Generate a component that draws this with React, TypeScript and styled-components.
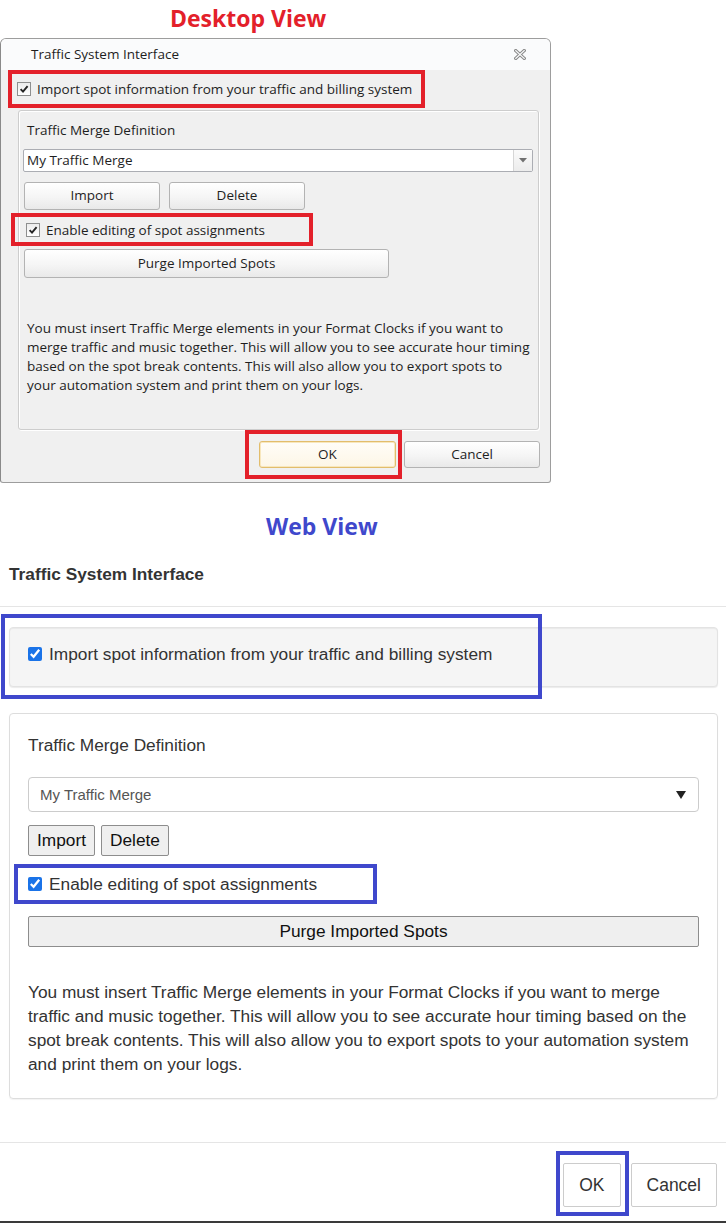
import React from "react";
import styled, { createGlobalStyle } from "styled-components";

const GlobalStyle = createGlobalStyle`
  html, body { margin: 0; padding: 0; background: #ffffff; }
  body { width: 726px; height: 1224px; overflow: hidden; }
  *, *::before, *::after { box-sizing: border-box; }
`;

const Page = styled.div`
  width: 726px;
  height: 1224px;
  display: flex;
  flex-direction: column;
  background: #ffffff;
`;

const ViewTitle = styled.div<{ $color: string; $indent: number; $h: number; $pt: number }>`
  height: ${(p) => p.$h}px;
  padding-top: ${(p) => p.$pt}px;
  padding-left: ${(p) => p.$indent}px;
  font-family: "Open Sans", "Noto Sans", sans-serif;
  font-weight: 700;
  font-size: 23px;
  line-height: 34px;
  color: ${(p) => p.$color};
  white-space: nowrap;
`;

const Highlight = styled.span<{ $color: string; $t: number; $l: number; $w: number; $h: number }>`
  position: absolute;
  top: ${(p) => p.$t}px;
  left: ${(p) => p.$l}px;
  width: ${(p) => p.$w}px;
  height: ${(p) => p.$h}px;
  border: 4px solid ${(p) => p.$color};
  pointer-events: none;
`;

/* ---------------- Desktop (Windows dialog) ---------------- */

const Win = styled.div`
  width: 551px;
  height: 445px;
  border: 1px solid #9d9d9d;
  border-left-color: #8a8a8a;
  border-radius: 6px 6px 3px 3px;
  background: #f0f0f0;
  display: flex;
  flex-direction: column;
  overflow: hidden;
  font-family: "Open Sans", "Noto Sans", sans-serif;
  font-size: 13.5px;
  color: #1e1e1e;
`;

const WinTitleBar = styled.div`
  height: 31px;
  flex: none;
  display: flex;
  align-items: center;
  justify-content: space-between;
  padding: 0 24px 0 30px;
  background: #fafbfc;
  line-height: 31px;
`;

const WinRow = styled.div<{ $ml: number; $w?: number; $h: number; $mt?: number; $pl?: number }>`
  position: relative;
  display: flex;
  align-items: center;
  gap: 6px;
  margin-left: ${(p) => p.$ml}px;
  margin-top: ${(p) => p.$mt ?? 0}px;
  ${(p) => (p.$w ? `width: ${p.$w}px;` : "")}
  height: ${(p) => p.$h}px;
  padding-left: ${(p) => p.$pl ?? 0}px;
  flex: none;
  white-space: nowrap;
`;

const WinCheck = styled.span`
  width: 14px;
  height: 14px;
  flex: none;
  border: 1px solid #8e8f8f;
  background: linear-gradient(#ececec, #ffffff);
  display: inline-flex;
  align-items: center;
  justify-content: center;
`;

const GroupBox = styled.div`
  margin: 2px 0 0 17px;
  width: 521px;
  height: 320px;
  flex: none;
  border: 1px solid #cdcdcd;
  border-radius: 3px;
  box-shadow: inset 1px 1px 0 #ffffff, 1px 1px 0 #ffffff;
  display: flex;
  flex-direction: column;
`;

const GroupLabel = styled.div`
  margin: 10px 0 0 8px;
  line-height: 18px;
`;

const WinCombo = styled.div`
  margin: 10px 0 0 4px;
  width: 510px;
  height: 23px;
  flex: none;
  display: flex;
  border: 1px solid #abadb3;
  border-radius: 2px;
  background: #ffffff;
`;

const WinComboText = styled.span`
  flex: 1;
  padding-left: 3px;
  line-height: 21px;
`;

const WinComboArrow = styled.span`
  width: 19px;
  border-left: 1px solid #d6d6d6;
  display: flex;
  align-items: center;
  justify-content: center;
  background: linear-gradient(#fafafa, #ececec);
`;

const WinButton = styled.button<{ $w: number; $h: number; $primary?: boolean; $ml?: number }>`
  width: ${(p) => p.$w}px;
  height: ${(p) => p.$h}px;
  margin: 0 0 0 ${(p) => p.$ml ?? 0}px;
  padding: 0;
  flex: none;
  border: 1px solid ${(p) => (p.$primary ? "#e2bd6c" : "#b3b3b3")};
  border-radius: 3px;
  background: ${(p) =>
    p.$primary
      ? "linear-gradient(#fffdf8, #fdf6e6)"
      : "linear-gradient(#ffffff, #f5f5f5 55%, #e9e9e9)"};
  box-shadow: ${(p) => (p.$primary ? "inset 0 0 0 1px #f8e7bd" : "none")};
  font-family: inherit;
  font-size: 13.5px;
  color: #1e1e1e;
  line-height: 1;
`;

const WinText = styled.p`
  margin: 41px 0 0 8px;
  line-height: 19px;
  white-space: nowrap;
`;

const Line = styled.span`
  display: block;
`;

const WinFooter = styled.div`
  margin-top: 11px;
  padding-right: 10px;
  display: flex;
  justify-content: flex-end;
  gap: 8px;
`;

const Anchor = styled.div`
  position: relative;
  display: flex;
`;

/* ---------------- Web view ---------------- */

const Web = styled.div`
  display: flex;
  flex-direction: column;
  font-family: "Liberation Sans", Arial, sans-serif;
  font-size: 17.3px;
  color: #333333;
  flex: 1;
`;

const WebHeader = styled.div`
  padding: 19px 9px 20px;
  border-bottom: 1px solid #e5e5e5;
  font-weight: 700;
  line-height: 24px;
`;

const WebBody = styled.div`
  padding: 20px 8px 43px 9px;
  display: flex;
  flex-direction: column;
  gap: 26px;
`;

const Well = styled.div`
  position: relative;
  height: 60px;
  padding: 14px 18px 20px;
  background: #f5f5f5;
  border: 1px solid #e3e3e3;
  border-radius: 4px;
  box-shadow: inset 0 1px 1px rgba(0, 0, 0, 0.05), 0 1px 1px rgba(0, 0, 0, 0.08);
`;

const CheckRow = styled.label<{ $mt?: number }>`
  position: relative;
  display: flex;
  align-items: center;
  gap: 7px;
  height: 24px;
  margin-top: ${(p) => p.$mt ?? 0}px;
  line-height: 24px;
  white-space: nowrap;
`;

const WebCheck = styled.input.attrs({ type: "checkbox" })`
  width: 14px;
  height: 14px;
  margin: 0;
  flex: none;
  accent-color: #1a73e8;
`;

const Panel = styled.div`
  height: 386px;
  padding: 19px 18px 21px;
  border: 1px solid #dddddd;
  border-radius: 4px;
  box-shadow: 0 1px 1px rgba(0, 0, 0, 0.05);
  display: flex;
  flex-direction: column;
`;

const PanelLabel = styled.div`
  line-height: 24px;
`;

const SelectBox = styled.div`
  margin-top: 20px;
  height: 35px;
  flex: none;
  display: flex;
  align-items: center;
  justify-content: space-between;
  padding: 0 12px 0 11px;
  border: 1px solid #cccccc;
  border-radius: 4px;
  background: #ffffff;
  font-size: 15px;
  color: #555555;
`;

const ButtonRow = styled.div`
  margin-top: 13px;
  display: flex;
  gap: 6px;
`;

const WebButton = styled.button<{ $block?: boolean; $mt?: number }>`
  height: 31px;
  margin: ${(p) => p.$mt ?? 0}px 0 0 0;
  padding: 0 8px;
  flex: none;
  ${(p) => (p.$block ? "width: 100%;" : "")}
  border: 1px solid #8d8d8d;
  border-radius: 2px;
  background: #efefef;
  font-family: inherit;
  font-size: 17.3px;
  color: #111111;
`;

const WebText = styled.p`
  margin: 33px 0 0;
  line-height: 24px;
  white-space: nowrap;
`;

const WebFooter = styled.div`
  flex: 1;
  border-top: 1px solid #e5e5e5;
  border-bottom: 2px solid #3a3a3a;
  margin-bottom: 1px;
  padding: 20px 9px 0 0;
  display: flex;
  justify-content: flex-end;
  align-items: flex-start;
  gap: 10px;
`;

const FooterButton = styled.button`
  height: 44px;
  padding: 0 15px;
  border: 1px solid #cccccc;
  border-radius: 2px;
  background: #ffffff;
  font-family: inherit;
  font-size: 17.5px;
  color: #333333;
`;

/* ---------------- Icons ---------------- */

const CheckMark = () => (
  <svg width="10" height="10" viewBox="0 0 10 10">
    <path d="M1.6 5.2 L4 7.6 L8.6 2.2" fill="none" stroke="#252525" strokeWidth="1.9" />
  </svg>
);

const CloseGlyph = () => (
  <svg width="12" height="11" viewBox="0 0 12 11">
    <path d="M1.8 1.6 L10.2 9.4 M10.2 1.6 L1.8 9.4" stroke="#8a8a8a" strokeWidth="3.3" strokeLinecap="square" />
    <path d="M1.8 1.6 L10.2 9.4 M10.2 1.6 L1.8 9.4" stroke="#fafbfc" strokeWidth="1.2" strokeLinecap="square" />
  </svg>
);

const ComboArrow = () => (
  <svg width="8" height="5" viewBox="0 0 8 5">
    <polygon points="0,0 8,0 4,4.5" fill="#707070" />
  </svg>
);

const SelectArrow = () => (
  <svg width="10" height="8" viewBox="0 0 10 8">
    <polygon points="0,0 10,0 5,8" fill="#222222" />
  </svg>
);

const RED = "#e3202a";
const BLUE = "#3f48cc";

const desktopText = [
  "You must insert Traffic Merge elements in your Format Clocks if you want to",
  "merge traffic and music together. This will allow you to see accurate hour timing",
  "based on the spot break contents. This will also allow you to export spots to",
  "your automation system and print them on your logs.",
];

const webText = [
  "You must insert Traffic Merge elements in your Format Clocks if you want to merge",
  "traffic and music together. This will allow you to see accurate hour timing based on the",
  "spot break contents. This will also allow you to export spots to your automation system",
  "and print them on your logs.",
];

export default function App() {
  return (
    <>
      <GlobalStyle />
      <Page>
        <ViewTitle $color={RED} $indent={170} $h={38} $pt={1}>
          Desktop View
        </ViewTitle>

        <Win>
          <WinTitleBar>
            <span>Traffic System Interface</span>
            <CloseGlyph />
          </WinTitleBar>

          <WinRow $ml={7} $w={417} $h={38} $pl={9}>
            <WinCheck>
              <CheckMark />
            </WinCheck>
            <span>Import spot information from your traffic and billing system</span>
            <Highlight $color={RED} $t={0} $l={0} $w={417} $h={38} />
          </WinRow>

          <GroupBox>
            <GroupLabel>Traffic Merge Definition</GroupLabel>
            <WinCombo>
              <WinComboText>My Traffic Merge</WinComboText>
              <WinComboArrow>
                <ComboArrow />
              </WinComboArrow>
            </WinCombo>
            <WinRow $ml={5} $h={28} $mt={10}>
              <WinButton $w={136} $h={28}>Import</WinButton>
              <WinButton $w={136} $h={28} $ml={3}>Delete</WinButton>
            </WinRow>
            <WinRow $ml={7} $h={33} $mt={3}>
              <WinCheck>
                <CheckMark />
              </WinCheck>
              <span>Enable editing of spot assignments</span>
              <Highlight $color={RED} $t={0} $l={-15} $w={302} $h={33} />
            </WinRow>
            <WinRow $ml={5} $h={29} $mt={3}>
              <WinButton $w={365} $h={29}>Purge Imported Spots</WinButton>
            </WinRow>
            <WinText>
              {desktopText.map((l) => (
                <Line key={l}>{l}</Line>
              ))}
            </WinText>
          </GroupBox>

          <WinFooter>
            <Anchor>
              <WinButton $w={137} $h={27} $primary>OK</WinButton>
              <Highlight $color={RED} $t={-11} $l={-14} $w={157} $h={49} />
            </Anchor>
            <WinButton $w={136} $h={27}>Cancel</WinButton>
          </WinFooter>
        </Win>

        <ViewTitle $color={BLUE} $indent={266} $h={60} $pt={26}>
          Web View
        </ViewTitle>

        <Web>
          <WebHeader>Traffic System Interface</WebHeader>
          <WebBody>
            <Well>
              <CheckRow>
                <WebCheck defaultChecked />
                Import spot information from your traffic and billing system
              </CheckRow>
              <Highlight $color={BLUE} $t={-14} $l={-9} $w={541} $h={85} />
            </Well>

            <Panel>
              <PanelLabel>Traffic Merge Definition</PanelLabel>
              <SelectBox>
                <span>My Traffic Merge</span>
                <SelectArrow />
              </SelectBox>
              <ButtonRow>
                <WebButton>Import</WebButton>
                <WebButton>Delete</WebButton>
              </ButtonRow>
              <CheckRow $mt={16}>
                <WebCheck defaultChecked />
                Enable editing of spot assignments
                <Highlight $color={BLUE} $t={-8} $l={-14} $w={363} $h={40} />
              </CheckRow>
              <WebButton $block $mt={20}>Purge Imported Spots</WebButton>
              <WebText>
                {webText.map((l) => (
                  <Line key={l}>{l}</Line>
                ))}
              </WebText>
            </Panel>
          </WebBody>

          <WebFooter>
            <Anchor>
              <FooterButton>OK</FooterButton>
              <Highlight $color={BLUE} $t={-12} $l={-7} $w={73} $h={65} />
            </Anchor>
            <FooterButton>Cancel</FooterButton>
          </WebFooter>
        </Web>
      </Page>
    </>
  );
}
